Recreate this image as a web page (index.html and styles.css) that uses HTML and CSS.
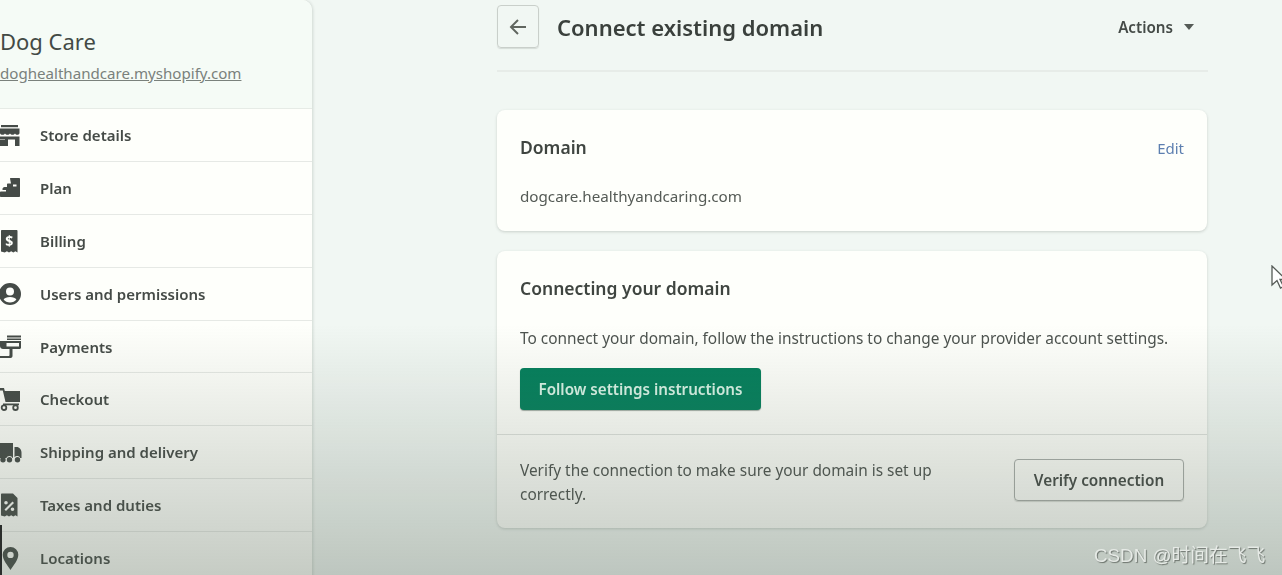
FILE: index.html
```html
<!DOCTYPE html>
<html lang="en">
<head>
<meta charset="utf-8">
<title>Connect existing domain</title>
<link rel="stylesheet" href="styles.css">
</head>
<body>
<div class="app">
  <aside class="sidebar">
    <header class="store">
      <div class="store-name">Dog Care</div>
      <a class="store-url">doghealthandcare.myshopify.com</a>
    </header>
    <nav class="nav">
      <a class="nav-item"><svg class="nav-icon" viewBox="0 0 24 24"><path d="M1 2h17v2.200H1z"/><path d="M0 5.500h19.500V10c0 1-1 1.800-2.200 1.800-1 0-1.900-.5-2.300-1.300-.5.800-1.400 1.300-2.500 1.300s-2-.5-2.500-1.300c-.5.800-1.400 1.300-2.500 1.300s-2-.5-2.500-1.300c-.5.800-1.300 1.300-2.300 1.300C1 11.800 0 11 0 10z"/><path d="M0 13.500h19.500V23h-4.500v-6.500H8V23H0v-6h5v-.5H0z" fill-rule="evenodd"/></svg><span>Store details</span></a>
      <a class="nav-item"><svg class="nav-icon" viewBox="0 0 24 24"><path fill-rule="evenodd" d="M10 2.500C10 2.200 10.200 2 10.500 2H19c.6 0 1 .4 1 1v17c0 .6-.4 1-1 1H1c-.6 0-1-.4-1-1v-3.500c0-.6.400-1 1-1h5V14H2.500v-1c0-1 .8-2 2-2H7V8.500c0-.6.400-1 1-1h3zM13 8.500v2h3.500v-2z"/></svg><span>Plan</span></a>
      <a class="nav-item"><svg class="nav-icon" viewBox="0 0 24 24"><path d="M2 1h14.500c.6 0 1 .4 1 1v21.500l-2.100-1.300-2.100 1.300-2.100-1.300-2.200 1.300-2.100-1.300-2.100 1.300L1 22.500V2c0-.6.400-1 1-1z"/><text class="billing-mark" x="9.300" y="17" text-anchor="middle">$</text></svg><span>Billing</span></a>
      <a class="nav-item"><svg class="nav-icon" viewBox="0 0 24 24"><path fill-rule="evenodd" d="M10 1a11 11 0 1 0 0 22 11 11 0 0 0 0-22zm0 4.500a4 4 0 1 1 0 8 4 4 0 0 1 0-8zm0 15c-2.700 0-5-1.200-6.400-3 .8-1.500 3.300-2.600 6.400-2.600s5.600 1.100 6.400 2.600c-1.400 1.800-3.700 3-6.400 3z"/></svg><span>Users and permissions</span></a>
      <a class="nav-item"><svg class="nav-icon" viewBox="0 0 24 24"><path d="M7 .500h14v2H7zM7 3.500h14v1.500H7z"/><path fill-rule="evenodd" d="M0 6h21v6.500c0 .8-.6 1.500-1.500 1.500H12.500v7c0 1-.8 2-2 2H0v-2h8.500c.6 0 1-.4 1-1v-6H3c-1.500 0-3-1.200-3-3zM6.500 8v3.500h12.500V8z"/></svg><span>Payments</span></a>
      <a class="nav-item"><svg class="nav-icon" viewBox="0 0 24 24"><path d="M0 1h4l.8 3H20v11H5.500L2.800 3.500H0z"/><path d="M3 16.500h16v1.800H3z"/><circle cx="4" cy="20.700" r="2.300" class="ring"/><circle cx="15.500" cy="20.700" r="2.300" class="ring"/></svg><span>Checkout</span></a>
      <a class="nav-item"><svg class="nav-icon" viewBox="0 0 24 24"><path d="M0 3h13v15h-.3a3.500 3.500 0 0 0-6.400 0H0z"/><path d="M14.500 7h2c3 0 5 2.700 5 5.500V18h-1.200a3.500 3.500 0 0 0-5.800-.7z"/><circle cx="3" cy="19.800" r="2.700"/><circle cx="9.500" cy="19.800" r="2.700"/><circle cx="17.500" cy="19.800" r="2.700"/></svg><span>Shipping and delivery</span></a>
      <a class="nav-item"><svg class="nav-icon" viewBox="0 0 24 24"><path fill-rule="evenodd" d="M2 .500h11l4.500 4.500v18.500l-2.100-1.300-2.100 1.300-2.100-1.300-2.200 1.300-2.100-1.300-2.100 1.300L1 22.500V1.500c0-.6.400-1 1-1zM12.500 8.500 4.500 16.500l1.500 1.500 8-8zM6 8a1.800 1.800 0 1 0 0 3.600A1.800 1.800 0 0 0 6 8zm6.500 6.500a1.800 1.800 0 1 0 0 3.600 1.800 1.800 0 0 0 0-3.600z"/></svg><span>Taxes and duties</span></a>
      <a class="nav-item"><svg class="nav-icon" viewBox="0 0 24 24"><path fill-rule="evenodd" d="M10.500 1A7.800 7.800 0 0 0 2.700 8.800c0 5.500 5 10.700 7.800 15.200 2.800-4.500 7.800-9.700 7.800-15.200A7.800 7.800 0 0 0 10.500 1zm0 4.700a3.200 3.200 0 1 1 0 6.400 3.200 3.200 0 0 1 0-6.400z"/></svg><span>Locations</span></a>
    </nav>
  </aside>

  <main class="main">
    <header class="page-head">
      <button class="back" aria-label="Back"><svg viewBox="0 0 20 20" class="back-icon"><path d="M18 9H5.400l5.300-5.300-1.400-1.400L1.600 10l7.700 7.700 1.400-1.400L5.400 11H18z"/></svg></button>
      <h1 class="page-title">Connect existing domain</h1>
      <button class="actions">Actions<span class="caret"></span></button>
    </header>

    <section class="card card-domain">
      <div class="card-row">
        <h2 class="card-title">Domain</h2>
        <a class="edit">Edit</a>
      </div>
      <p class="domain-value">dogcare.healthyandcaring.com</p>
    </section>

    <section class="card card-connect">
      <div class="connect-top">
        <h2 class="card-title">Connecting your domain</h2>
        <p class="connect-text">To connect your domain, follow the instructions to change your provider account settings.</p>
        <button class="primary">Follow settings instructions</button>
      </div>
      <div class="connect-bottom">
        <p class="verify-text">Verify the connection to make sure your domain is set up correctly.</p>
        <button class="secondary">Verify connection</button>
      </div>
    </section>
  </main>
</div>
<div class="shade"></div>
<div class="edge-line"></div>
<svg class="cursor" viewBox="0 0 14 24"><path d="M1 1v19l5-4.500 3.500 7.500 3-1.500L9 14.500h6z"/></svg>
<div class="watermark">CSDN @时间在飞飞</div>
</body>
</html>
```

FILE: styles.css
```css
* { box-sizing: border-box; }
html, body { margin: 0; height: 575px; overflow: hidden; }
body {
  position: relative;
  background: #f1f7f3;
  color: #3f4540;
  font-family: "Noto Sans", "Open Sans", "Liberation Sans", sans-serif;
  font-size: 15.300px;
}
.app {
  display: flex;
  height: 575px;
  filter: blur(.45px);
}
.sidebar {
  flex: 0 0 312px;
  height: 600px;
  background: #fefffb;
  border-top-right-radius: 10px;
  box-shadow: 1px 0 3px rgba(60, 80, 65, .18);
  margin-right: 185px;
}
.store {
  height: 109px;
  padding-top: 26px;
  background: #f5fbf6;
  border-bottom: 1px solid #e6ebe6;
  border-top-right-radius: 10px;
}
.store-name { font-size: 22px; line-height: 30px; color: #434a45; }
.store-url {
  display: block;
  margin-top: 7px;
  font-size: 15.100px;
  line-height: 20px;
  color: #7a817c;
  text-decoration: underline;
}
.nav-item {
  display: flex;
  align-items: center;
  height: 52.900px;
  border-bottom: 1px solid #e6e9e5;
  font-weight: 600;
  font-size: 15px;
  color: #454b47;
}
.nav-icon { width: 24px; height: 24px; margin-right: 16px; fill: #454b47; flex: none; }
.nav-icon .ring { fill: #fefffb; stroke: #454b47; stroke-width: 1.800; }
.billing-mark { fill: #fefffb; font-size: 14px; font-weight: 700; }
.main { flex: 0 0 710px; }
.page-head {
  display: flex;
  align-items: center;
  height: 72px;
  margin-right: -1px;
  padding-bottom: 20px;
  padding-top: 3px;
  border-bottom: 2px solid #e7ece8;
}
.back {
  width: 42px;
  height: 43px;
  padding: 0;
  display: flex;
  align-items: center;
  justify-content: center;
  background: transparent;
  border: 1px solid #c9cfca;
  border-radius: 4px;
  box-shadow: 0 1px 1px rgba(60, 70, 60, .15);
}
.back-icon { width: 20px; height: 20px; fill: #60665f; }
.page-title {
  margin: 0 0 0 18px;
  flex: 1;
  font-size: 22px;
  font-weight: 600;
  color: #3a403c;
}
.actions {
  display: flex;
  align-items: center;
  margin-right: 14px;
  padding: 0;
  background: none;
  border: 0;
  font: 600 15.200px "Noto Sans", "Open Sans", sans-serif;
  color: #454b47;
}
.caret {
  width: 0;
  height: 0;
  margin-left: 11px;
  border-style: solid;
  border-width: 6px 5.500px 0;
  border-color: #555b56 transparent transparent;
}
.card {
  background: #fefffb;
  border-radius: 8px;
  box-shadow: 0 1px 3px rgba(60, 75, 65, .22);
}
.card-domain {
  margin-top: 38px;
  height: 121px;
  padding: 22px 23px 0;
}
.card-row { display: flex; justify-content: space-between; align-items: center; }
.card-title { margin: 0; font-size: 17.500px; font-weight: 600; line-height: 30px; color: #3f4540; }
.edit { padding-top: 2px; font-size: 15px; color: #5d7fb0; }
.domain-value { margin: 24px 0 0; font-size: 15.200px; line-height: 20px; color: #555b56; }
.card-connect { margin-top: 20px; height: 277px; display: flex; flex-direction: column; }
.connect-top { height: 184px; padding: 22px 23px 0; border-bottom: 1px solid #dfe2dd; }
.connect-text { margin: 26px 0 0; font-size: 15.400px; line-height: 20px; color: #4d534f; }
.primary {
  display: block;
  width: 241px;
  height: 42px;
  margin-top: 19px;
  padding: 0;
  background: #047f5c;
  border: 0;
  border-radius: 4px;
  box-shadow: 0 1px 1px rgba(30, 50, 40, .4);
  font: 600 15.200px "Noto Sans", "Open Sans", sans-serif;
  color: #d8f3e6;
}
.connect-bottom {
  flex: 1;
  display: flex;
  align-items: flex-start;
  justify-content: space-between;
  padding: 24px 23px 0;
}
.verify-text { margin: 0; width: 440px; font-size: 15.400px; line-height: 24px; color: #4d534f; }
.secondary {
  width: 170px;
  height: 42px;
  padding: 0;
  background: transparent;
  border: 1px solid #a9aeaa;
  border-radius: 4px;
  box-shadow: 0 1px 1px rgba(60, 70, 60, .2);
  font: 600 15.300px "Noto Sans", "Open Sans", sans-serif;
  color: #454b47;
}
.shade {
  position: absolute;
  inset: 0;
  pointer-events: none;
  background: linear-gradient(to bottom, rgba(85, 100, 85, 0) 325px, rgba(85, 100, 85, .33) 575px);
}
.edge-line {
  position: absolute;
  left: 0;
  top: 525px;
  width: 2px;
  height: 50px;
  background: #2b2e2c;
}
.cursor {
  position: absolute;
  left: 1271px;
  top: 265px;
  width: 14px;
  height: 24px;
  fill: #fff;
  stroke: #555b56;
  stroke-width: 1.300;
}
.watermark {
  position: absolute;
  left: 1094px;
  top: 545px;
  font-family: "Liberation Sans", "Noto Sans CJK SC", sans-serif;
  font-size: 18.800px;
  line-height: 22px;
  color: #e6eae6;
  text-shadow: 1px 1px 1px #6b726c;
}
```
